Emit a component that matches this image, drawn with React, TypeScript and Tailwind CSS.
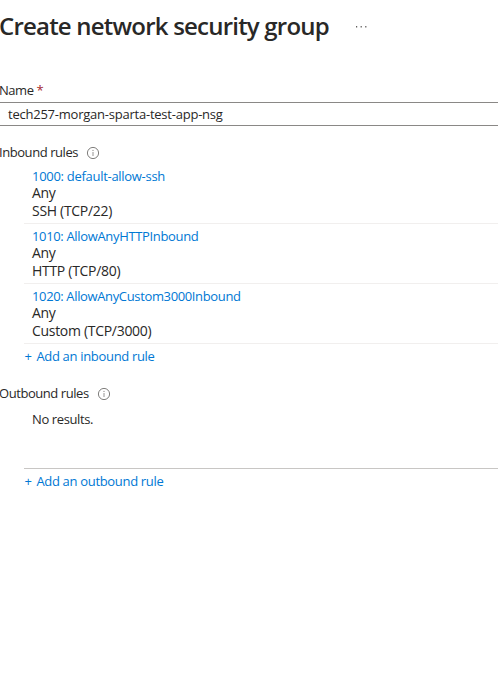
import React from "react";

function Info() {
  return (
    <svg className="mt-px h-3 w-3 shrink-0 overflow-visible" viewBox="0 0 12 12" fill="none">
      <circle cx="6" cy="6" r="5.6" stroke="#605e5c" strokeWidth="0.8" />
      <path d="M6 5v4" stroke="#8a8886" strokeWidth="0.9" />
      <circle cx="6" cy="3.4" r="0.6" fill="#8a8886" />
    </svg>
  );
}

function AddLink({ children }: { children: React.ReactNode }) {
  return (
    <a className="mt-[3px] flex text-[#0078d4] tracking-[-0.32px]">
      <span className="w-[12.4px] pl-[0.4px]">+</span>
      <span>{children}</span>
    </a>
  );
}

const rules = [
  { name: "1000: default-allow-ssh", service: "SSH (TCP/22)", tracking: "tracking-[-0.29px]" },
  { name: "1010: AllowAnyHTTPInbound", service: "HTTP (TCP/80)", tracking: "tracking-[-0.34px]" },
  { name: "1020: AllowAnyCustom3000Inbound", service: "Custom (TCP/3000)", tracking: "tracking-[-0.36px]" },
];

export default function App() {
  return (
    <main className="h-[695px] w-[498px] overflow-hidden bg-white font-['Open_Sans','Noto_Sans',sans-serif] text-[13px] leading-[18px] text-[#292827]">
      <header className="flex h-[54px] items-center">
        <h1 className="-ml-px w-[357px] whitespace-nowrap pb-[2px] text-2xl font-semibold tracking-[-0.79px]">
          Create network security group
        </h1>
        <svg className="h-[2px] w-[11px]" viewBox="0 0 11 2" fill="#605e5c">
          <rect x="0" width="1.2" height="1.5" />
          <rect x="4.6" width="1.2" height="1.5" />
          <rect x="9.2" width="1.2" height="1.5" />
        </svg>
      </header>
      <div className="-ml-px mt-[27px] flex h-[21px] gap-[3px]">
        <span className="tracking-[-0.45px]">Name</span>
        <span className="text-[#a4262c]">*</span>
      </div>
      <div className="flex h-6 items-center border-y border-[#8a8886] pl-2 tracking-[-0.23px]">
        tech257-morgan-sparta-test-app-nsg
      </div>
      <div className="mt-[17px] flex items-center gap-2">
        <span className="-ml-px w-20 whitespace-nowrap tracking-[-0.44px]">Inbound rules</span>
        <Info />
      </div>
      <section className="ml-6 mt-[3px]">
        {rules.map((r) => (
          <div key={r.name} className="h-[60px] border-b border-[#f1efee] pl-2 pt-[3px]">
            <div className={`h-[17px] text-[#0078d4] ${r.tracking}`}>{r.name}</div>
            <div className="text-sm leading-[18px] tracking-[-0.3px]">Any</div>
            <div className="text-sm leading-[18px] tracking-[-0.3px]">{r.service}</div>
          </div>
        ))}
        <AddLink>Add an inbound rule</AddLink>
      </section>
      <div className="mt-[19px] flex items-center gap-2">
        <span className="-ml-px w-[91px] whitespace-nowrap tracking-[-0.44px]">Outbound rules</span>
        <Info />
      </div>
      <section className="ml-6 mt-2">
        <div className="h-[59px] border-b border-[#c8c6c4] pl-2 tracking-[-0.38px]">No results.</div>
        <AddLink>Add an outbound rule</AddLink>
      </section>
    </main>
  );
}
